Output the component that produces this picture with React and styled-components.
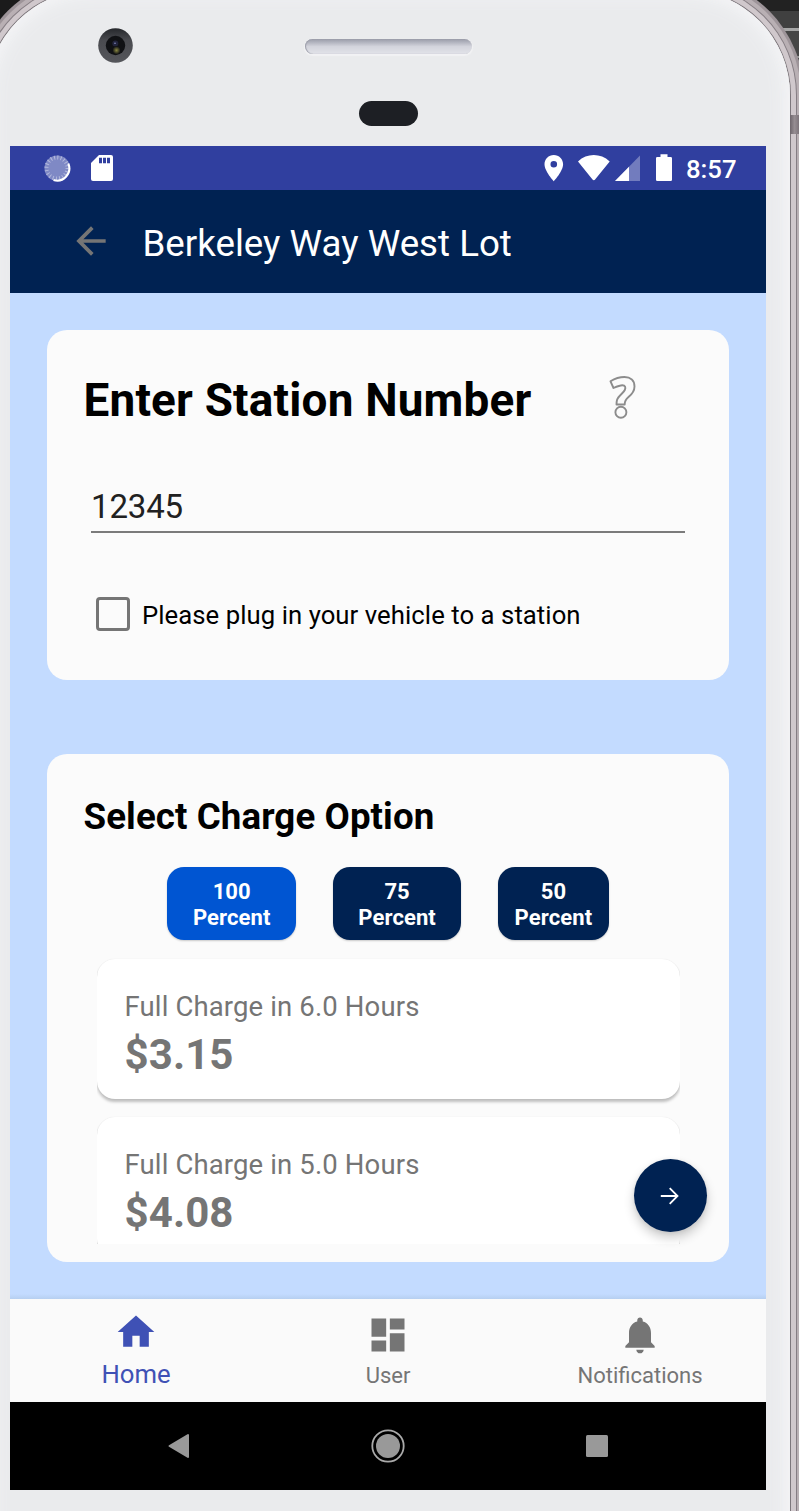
import React from "react";
import styled, { createGlobalStyle } from "styled-components";

const navy = "#002252";
const gray = "#757575";

const GlobalStyle = createGlobalStyle`
  * { box-sizing: border-box; }
  body { margin: 0; font-family: Roboto, "Liberation Sans", sans-serif; }
  svg { display: block; flex: none; }
`;

const Desktop = styled.div`
  width: 799px;
  height: 1511px;
  overflow: hidden;
  background: linear-gradient(#222 0 11px, #404040 11px 28px, #a6a6a6 28px 31px, #464646 31px 56px, #999 56px 58px, #3c3c3c 58px)
    right / 60px 100% no-repeat #1b1b1b;
`;

const Phone = styled.div`
  width: 803px;
  height: 1700px;
  margin: -10px 0 0 -13px;
  padding: 10px 24px 0 23px;
  border-radius: 105px;
  background: #eaebed;
  box-shadow: inset 0 0 8px 3px #f2f2f4, inset 0 0 18px 6px #f2f3f5,
    0 0 0 1px #7d777c, 0 0 0 6px #d0c8cc, 0 0 0 7px #857d83, 0 0 0 11px #b9b0b4,
    0 0 0 14px #9d9499;
`;

const Bezel = styled.div`
  height: 146px;
  padding: 28px 0 0 88px;
  display: grid;
  grid-template-columns: 207px 1fr;
  grid-template-rows: 73px auto;
`;

const Speaker = styled.div`
  width: 167px;
  height: 15px;
  margin-top: 11px;
  border-radius: 8px;
  background: linear-gradient(#9a9ca8, #b2b4bf 22%, #d3d4dc 50%, #e2e3e9);
  box-shadow: 0 1px 1px 1px #f2f2f4, inset 1px 0 1px #9a9ca8;
`;

const Sensor = styled.div`
  grid-column: 2;
  width: 59px;
  height: 25px;
  margin-left: 54px;
  border-radius: 13px;
  background: #1d1f24;
`;

const AntennaBand = styled.div`
  position: absolute;
  left: 790px;
  top: 115px;
  width: 9px;
  height: 19px;
  background: linear-gradient(90deg, #6e666c, #968d92 50%, #7e757b);
`;

const StatusBar = styled.div`
  height: 44px;
  padding: 0 29px 0 34px;
  display: flex;
  align-items: center;
  background: #303f9f;
`;

const StatusGroup = styled.div`
  display: flex;
  align-items: center;
  margin-left: ${(p) => (p.$end ? "auto" : "0")};
`;

const Clock = styled.span`
  margin-left: 12px;
  width: 51px;
  white-space: nowrap;
  color: #fff;
  font-size: 25.7px;
  font-weight: 500;
  line-height: 44px;
  padding-top: 2px;
`;

const AppBar = styled.header`
  height: 103px;
  padding-left: 59px;
  display: flex;
  align-items: center;
  gap: 29.500px;
  background: ${navy};

  > svg {
    margin-top: -1px;
  }
`;

const PageTitle = styled.h1`
  margin: 4px 0 0;
  color: #fff;
  font-size: 36.7px;
  font-weight: 400;
  white-space: nowrap;
`;

const Content = styled.main`
  height: 1006px;
  padding: 37px;
  display: flex;
  flex-direction: column;
  gap: 73.5px;
  background: linear-gradient(transparent 1001px, #b6cff0) #c3dbff;
`;

const Card = styled.section`
  height: ${(p) => p.$height}px;
  flex: none;
  border-radius: 20px;
  background: #fbfbfb;
`;

const StationHeader = styled.div`
  padding: 43px 92px 0 36.500px;
  height: 146px;
  display: flex;
  justify-content: space-between;
  align-items: flex-start;

  > svg {
    margin-top: 1px;
  }
`;

const Heading = styled.h2`
  margin: 0;
  color: #000;
  font-weight: 700;
  font-size: ${(p) => p.$size}px;
  line-height: 54px;
  letter-spacing: ${(p) => p.$spacing || 0}px;
  white-space: nowrap;
`;

const StationInput = styled.input`
  display: block;
  width: 594px;
  height: 57px;
  margin-left: 44px;
  padding: 5px 0 0;
  border: 0;
  border-bottom: 2px solid #7b7b7b;
  background: none;
  color: #212121;
  font: 400 33px Roboto, sans-serif;
  letter-spacing: -0.15px;
  outline: 0;
`;

const CheckRow = styled.label`
  display: flex;
  align-items: center;
  gap: 12px;
  margin: 64px 0 0 49px;
  height: 34px;
  color: #000;
  font-size: 25.7px;
  letter-spacing: 0.06px;
  white-space: nowrap;
`;

const CheckLabel = styled.span`
  padding-top: 2px;
`;

const CheckBox = styled.span`
  width: 34px;
  height: 34px;
  border: 3.5px solid ${gray};
  border-radius: 4px;
`;

const ChargeHeader = styled.div`
  height: 113.5px;
  padding: 36px 0 0 36.500px;
`;

const Percents = styled.div`
  display: flex;
  gap: 36.7px;
  padding-left: 120.4px;
`;

const PercentButton = styled.button`
  width: ${(p) => p.$width}px;
  height: 73px;
  padding: 2px 0 0;
  border: 0;
  border-radius: 17px;
  background: ${(p) => (p.$selected ? "#0055d2" : navy)};
  box-shadow: 0 1px 2px rgba(0, 0, 0, 0.2);
  color: #fff;
  font: 700 22px/25.8px Roboto, sans-serif;
  letter-spacing: 0.1px;
`;

const OptionList = styled.div`
  width: 583px;
  height: 286px;
  margin: 18px 0 0 49.5px;
  padding-top: 1px;
  overflow: hidden;
`;

const Option = styled.div`
  height: 140px;
  margin-bottom: 18px;
  padding: 27px 28px 0;
  border-radius: 18px;
  background: #fff;
  box-shadow: 0 3px 3px rgba(0, 0, 0, 0.24), 0 0 1px rgba(0, 0, 0, 0.12);
  color: ${gray};
`;

const Duration = styled.div`
  font-size: 27.5px;
  line-height: 42px;
  letter-spacing: 0.13px;
  white-space: nowrap;
`;

const Price = styled.div`
  font-size: 42px;
  font-weight: 700;
  line-height: 54px;
  letter-spacing: 0.1px;
`;

const NextButton = styled.button`
  position: absolute;
  left: 634px;
  top: 1159px;
  width: 73px;
  height: 73px;
  padding: 0 1px 0 0;
  border: 0;
  border-radius: 50%;
  display: grid;
  place-items: center;
  background: ${navy};
  box-shadow: 0 6px 11px rgba(0, 0, 0, 0.2), 0 1px 4px rgba(0, 0, 0, 0.08);
`;

const BottomNav = styled.nav`
  height: 103px;
  display: grid;
  grid-template-columns: repeat(3, 1fr);
  background: #fafafa;
`;

const NavItem = styled.div`
  display: flex;
  flex-direction: column;
  align-items: center;
  padding-top: ${(p) => (p.$active ? 11 : 14)}px;
  color: ${(p) => (p.$active ? "#3f51b5" : gray)};
  font-size: ${(p) => (p.$active ? 25.7 : 22)}px;
  line-height: ${(p) => (p.$active ? 40 : 37)}px;
`;

const SystemNav = styled.div`
  height: 88px;
  display: grid;
  grid-template-columns: repeat(3, 209.3px);
  justify-content: center;
  place-items: center;
  background: #000;
`;

const icons = {
  home: "M10 20v-6h4v6h5v-8h3L12 3 2 12h3v8z",
  dashboard: "M3 13h8V3H3v10zm0 8h8v-6H3v6zm10 0h8V11h-8v10zm0-18v6h8V3h-8z",
  bell: "M12 22c1.1 0 2-.9 2-2h-4c0 1.1.89 2 2 2zm6-6v-5c0-3.07-1.64-5.64-4.5-6.32V4c0-.83-.67-1.5-1.5-1.5s-1.5.67-1.5 1.5v.68C7.63 5.36 6 7.92 6 11v5l-2 2v1h16v-1l-2-2z",
  back: "M20 11H7.83l5.59-5.59L12 4l-8 8 8 8 1.41-1.41L7.83 13H20v-2z",
};

const Icon = ({ name, color = "currentColor" }) => (
  <svg width="44" height="44" viewBox="0 0 24 24" fill={color}>
    <path d={icons[name]} />
  </svg>
);

const Camera = () => (
  <svg width="35" height="35" viewBox="0 0 35 35">
    <defs>
      <linearGradient id="ring" x2="0" y2="1">
        <stop stopColor="#25272b" />
        <stop offset=".35" stopColor="#4a4b50" />
        <stop offset="1" stopColor="#55565b" />
      </linearGradient>
      <radialGradient id="glint">
        <stop stopColor="#8a8842" />
        <stop offset="1" stopColor="#101114" />
      </radialGradient>
    </defs>
    <circle cx="17.5" cy="17.5" r="17.3" fill="url(#ring)" />
    <circle cx="17.5" cy="17.5" r="9.7" fill="#101114" />
    <circle cx="17.3" cy="15.5" r="3" fill="#22243c" />
    <circle cx="18.5" cy="22.3" r="4" fill="url(#glint)" />
    <circle cx="17" cy="15.3" r=".8" fill="#8a90c8" />
  </svg>
);

const Spinner = () => (
  <svg width="27" height="27" viewBox="0 0 27 27" fill="none">
    <circle cx="13.3" cy="13.3" r="12.8" fill="#7f89c5" />
    <circle cx="13" cy="13" r="10.5" stroke="#b4badd" strokeWidth="4" strokeDasharray="1 2.3" />
    <path d="M24.3 8.5A12.2 12.2 0 0 1 9.5 25" stroke="#fff" strokeWidth="2" />
  </svg>
);

const SdCard = () => (
  <svg width="22" height="26" viewBox="0 0 22 26">
    <path d="M8 0h12q2 0 2 2v22q0 2-2 2H2q-2 0-2-2V8z" fill="#fff" />
    <path d="M8 2.7h3v5.6H8zM12 2.7h3v5.6h-3zM16 2.7h3v5.6h-3z" fill="#303f9f" />
  </svg>
);

const StatusIcons = () => (
  <svg width="130" height="28" viewBox="544 154 130 28" fill="#fff">
    <path fillRule="evenodd" d="M553.8 155c-5.2 0-9.3 4.1-9.3 9.3 0 7 9.3 17 9.3 17s9.3-10 9.3-17c0-5.2-4.1-9.3-9.3-9.3zm0 12.6a3.3 3.3 0 1 1 0-6.6 3.3 3.3 0 0 1 0 6.6z" />
    <path d="M578 161.4C587 152.900 600.5 152.900 609.7 161.400L595.3 179.300Q593.8 181.200 592.3 179.300Z" />
    <path d="M615 181L640 155.500V181z" fillOpacity=".32" />
    <path d="M615 181L629 166.700V181z" />
    <path d="M660.5 154.300h7v2.700h3.200q1.300 0 1.300 1.300v21.400q0 1.300-1.300 1.300h-13.400q-1.300 0-1.300-1.300v-21.400q0-1.300 1.300-1.300h3.200z" />
  </svg>
);

const HelpIcon = () => (
  <svg width="29" height="46" viewBox="608 374 29 46" fill="none" stroke="#8c8c8c" strokeWidth="1.9" strokeLinejoin="round">
    <path d="M610.5 381.300L613.5 388C617.500 386.300 620 385.300 622.300 385.300C625.200 385.300 626 387.500 624.800 390C623.500 393 618 396 617 400Q616.500 402 616.500 404.500H624.700C624.500 400.800 625.500 399.500 628.500 397C632.500 393.800 634.500 391 634.500 386.500C634.500 380.500 630.500 377 624.500 377C619.500 377 614.500 378.800 610.500 381.300Z" />
    <circle cx="620.9" cy="412.2" r="5.5" />
  </svg>
);

const ForwardArrow = () => (
  <svg width="20" height="20" viewBox="0 0 20 20" fill="none" stroke="#fff" strokeWidth="1.8">
    <path d="M.8 10H17.500M9.700 2.200L17.500 10L9.700 17.800" />
  </svg>
);

const percents = [
  { value: 100, width: 128.7, selected: true },
  { value: 75, width: 128.7 },
  { value: 50, width: 110.5 },
];

const options = [
  { hours: "6.0", price: "$3.15" },
  { hours: "5.0", price: "$4.08" },
];

const StorageNotice = styled.div`
  margin-left: 20px;
`;

export default function App() {
  return (
    <Desktop>
      <GlobalStyle />
      <Phone>
        <Bezel>
          <Camera />
          <Speaker />
          <Sensor />
        </Bezel>
        <StatusBar>
          <StatusGroup>
            <Spinner />
            <StorageNotice>
              <SdCard />
            </StorageNotice>
          </StatusGroup>
          <StatusGroup $end>
            <StatusIcons />
            <Clock>8:57</Clock>
          </StatusGroup>
        </StatusBar>
        <AppBar>
          <Icon name="back" color={gray} />
          <PageTitle>Berkeley Way West Lot</PageTitle>
        </AppBar>
        <Content>
          <Card $height={350}>
            <StationHeader>
              <Heading $size={45.9} $spacing={0.18}>Enter Station Number</Heading>
              <HelpIcon />
            </StationHeader>
            <StationInput defaultValue="12345" />
            <CheckRow>
              <CheckBox />
              <CheckLabel>Please plug in your vehicle to a station</CheckLabel>
            </CheckRow>
          </Card>
          <Card $height={508}>
            <ChargeHeader>
              <Heading $size={36.7} $spacing={0.09}>Select Charge Option</Heading>
            </ChargeHeader>
            <Percents>
              {percents.map((p) => (
                <PercentButton key={p.value} $width={p.width} $selected={p.selected}>
                  {p.value}
                  <br />
                  Percent
                </PercentButton>
              ))}
            </Percents>
            <OptionList>
              {options.map((o) => (
                <Option key={o.hours}>
                  <Duration>Full Charge in {o.hours} Hours</Duration>
                  <Price>{o.price}</Price>
                </Option>
              ))}
            </OptionList>
          </Card>
        </Content>
        <BottomNav>
          <NavItem $active>
            <Icon name="home" />
            Home
          </NavItem>
          <NavItem>
            <Icon name="dashboard" />
            User
          </NavItem>
          <NavItem>
            <Icon name="bell" />
            Notifications
          </NavItem>
        </BottomNav>
        <SystemNav>
          <svg width="22" height="26" viewBox="0 0 22 26" fill="#999" stroke="#999" strokeWidth="2" strokeLinejoin="round">
            <path d="M1.5 13L20 2V24Z" />
          </svg>
          <svg width="34" height="34" viewBox="0 0 34 34" fill="#999">
            <circle cx="17" cy="17" r="15.7" fill="none" stroke="#aaa" strokeWidth="1.8" />
            <circle cx="17" cy="17" r="12" />
          </svg>
          <svg width="22" height="22" viewBox="0 0 22 22" fill="#999">
            <rect width="22" height="22" rx="1.5" />
          </svg>
        </SystemNav>
      </Phone>
      <AntennaBand />
      <NextButton aria-label="Next">
        <ForwardArrow />
      </NextButton>
    </Desktop>
  );
}
